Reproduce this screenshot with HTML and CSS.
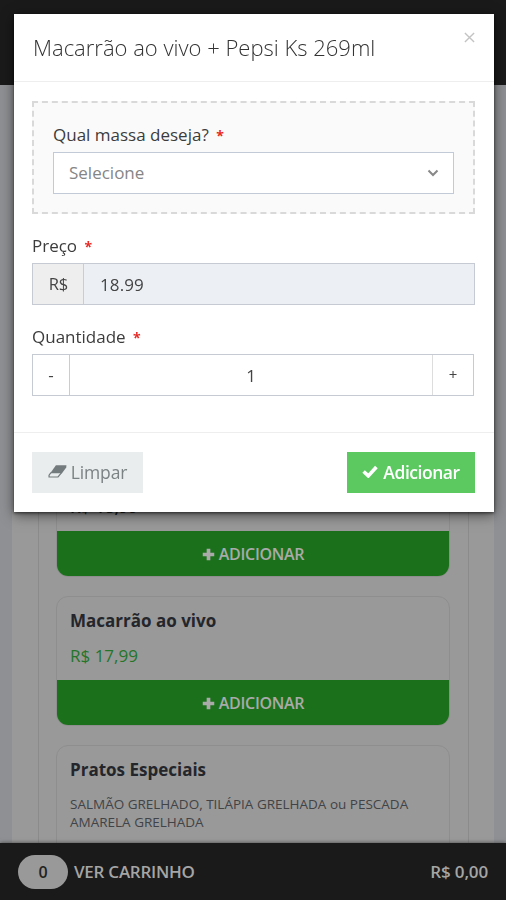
FILE: index.html
```html
<!DOCTYPE html>
<html lang="pt-BR">
<head>
<meta charset="utf-8">
<title>Macarrão ao vivo + Pepsi Ks 269ml</title>
<link rel="stylesheet" href="styles.css">
</head>
<body>
<div class="page">
  <header class="topbar"></header>
  <main class="content">
    <div class="panel">
      <section class="list">
        <article class="card">
          <div class="card-body card-body-low"><p class="price price-dark">R$ 18,99</p></div>
          <button class="card-add"><svg class="plus" viewBox="0 0 12 12"><path d="M4.300.7h3.400v3.600h3.600v3.400H7.700v3.600H4.300V7.700H.7V4.300h3.600z"/></svg><span>ADICIONAR</span></button>
        </article>
        <article class="card">
          <div class="card-body"><h3>Macarrão ao vivo</h3><p class="price">R$ 17,99</p></div>
          <button class="card-add"><svg class="plus" viewBox="0 0 12 12"><path d="M4.300.7h3.400v3.600h3.600v3.400H7.700v3.600H4.300V7.700H.7V4.300h3.600z"/></svg><span>ADICIONAR</span></button>
        </article>
        <article class="card card-tall">
          <div class="card-body"><h3>Pratos Especiais</h3><p class="desc">SALMÃO GRELHADO, TILÁPIA GRELHADA ou PESCADA<br>AMARELA GRELHADA</p></div>
        </article>
      </section>
    </div>
  </main>
  <footer class="cart"><span class="count">0</span><span class="cart-label">VER CARRINHO</span><span class="total">R$ 0,00</span></footer>
</div>
<div class="modal">
  <div class="modal-head">
    <h2>Macarrão ao vivo + Pepsi Ks 269ml</h2>
    <svg class="close" viewBox="0 0 12 12"><path d="M1 1l10 10M11 1L1 11"/></svg>
  </div>
  <div class="modal-body">
    <div class="option">
      <label>Qual massa deseja? <b>*</b></label>
      <div class="select"><span>Selecione</span><svg viewBox="0 0 12 8"><path d="M1.500 1.500L6 6l4.500-4.500"/></svg></div>
    </div>
    <label>Preço <b>*</b></label>
    <div class="group price-group"><span class="addon">R$</span><span class="value">18.99</span></div>
    <label>Quantidade <b>*</b></label>
    <div class="group qty-group"><span class="minus">-</span><span class="qty">1</span><span class="more">+</span></div>
  </div>
  <div class="modal-foot">
    <button class="btn clear"><svg class="eraser" viewBox="0 0 20 14"><path class="solid" d="M8.300.4h11.300l-.2 2.200-4.600 6.200H2.200z"/><path class="line" d="M3 8.200L.9 11v1.900h9.700l4-4.900"/></svg><span>Limpar</span></button>
    <button class="btn add"><svg class="check" viewBox="0 0 16 13"><path d="M1.600 6.500l4.700 4.400L14.400 2"/></svg><span>Adicionar</span></button>
  </div>
</div>
</body>
</html>
```
FILE: styles.css
```css
* { box-sizing: border-box; }
html, body { margin: 0; height: 100%; overflow: hidden; }
body { font-family: "Open Sans", sans-serif; background: #8e9093; }
h2, h3, p { margin: 0; }
button { border: 0; font-family: inherit; }
.page { height: 900px; display: flex; flex-direction: column; }
.topbar { height: 85px; flex: none; background: #1a1a1a; }
.content { flex: 1; min-height: 0; overflow: hidden; padding: 0 12px; }
.panel { height: 758px; background: #999; padding: 0 25px 0 26px; }
.list { height: 100%; border: 1px solid #8b8b8b; border-width: 0 1px; padding: 362px 18px 0; }
.card { height: 130px; margin: 0 0 19px -1px; border: 1px solid #8e8e8e; border-radius: 12px; overflow: hidden; display: flex; flex-direction: column; justify-content: space-between; }
.card-tall { height: 180px; }
.card-body { padding: 13px 12px 0 13px; }
.card-body-low { padding-top: 49px; }
.card h3 { font-size: 17px; line-height: 22px; font-weight: 700; color: #24262b; }
.price { margin-top: 14px; font-size: 17px; line-height: 20px; color: #257529; }
.price-dark { margin-top: 0; color: #222; font-weight: 600; }
.card-add { height: 46px; flex: none; margin: 0 -1px -1px; background: #1b711b; color: #aaa; display: flex; align-items: center; justify-content: center; gap: 4px; font-size: 16px; font-weight: 600; letter-spacing: -.3px; }
.plus { width: 13px; height: 13px; fill: #aaa; }
.desc { margin-top: 14px; font-size: 13.500px; line-height: 18px; color: #414346; white-space: nowrap; }
.cart { height: 57px; flex: none; background: #1a1a1a; box-shadow: 0 0 4px #444; color: #a5a5a5; display: flex; align-items: center; padding: 0 18px; font-size: 17px; font-weight: 600; position: relative; }
.count { width: 50px; height: 34px; border-radius: 17px; background: #999; color: #222; font-size: 16px; display: flex; align-items: center; justify-content: center; }
.cart-label { margin-left: 6px; letter-spacing: -.25px; }
.total { margin-left: auto; letter-spacing: -.15px; }
.modal { position: fixed; left: 14px; top: 14px; width: 480px; height: 498px; background: #fff; box-shadow: 0 1px 3px rgba(0,0,0,.6), 0 3px 12px rgba(0,0,0,.55); display: flex; flex-direction: column; }
.modal-head { height: 68px; flex: none; border-bottom: 1px solid #eee; padding: 0 19px; display: flex; align-items: center; justify-content: space-between; }
.modal-head h2 { font-size: 22px; line-height: 30px; margin-top: -2px; font-weight: 300; color: #333; white-space: nowrap; }
.close { width: 11px; height: 11px; align-self: flex-start; margin-top: 18px; fill: none; stroke: #c3c3c3; stroke-width: 1.500; }
.modal-body { flex: 1; padding: 19px 19px 0 18px; color: #444; font-size: 17px; }
label { display: block; height: 31px; line-height: 28px; font-size: 17px; color: #3c3c3c; }
label b { color: #e72b26; font-size: 14px; margin-left: 3px; }
.option { height: 113px; border: 2px dashed #d9d9d9; background: #fafafa; padding: 18px 19px 0; margin-bottom: 18px; }
.select { height: 42px; border: 1px solid #c2cad8; background: #fff; padding: 0 14px 2px 15px; display: flex; align-items: center; justify-content: space-between; color: #858585; }
.select svg { width: 12px; height: 8px; margin-top: 2px; fill: none; stroke: #888; stroke-width: 2; }
.group { height: 42px; display: flex; border: 1px solid #c5cad3; }
.price-group { margin-bottom: 18px; }
.group span { display: flex; align-items: center; }
.group .addon { width: 51px; justify-content: center; background: #eee; border-right: 1px solid #c8cdd4; font-size: 16.500px; padding: 0 0 2px 1px; }
.value { flex: 1; background: #ecf0f4; padding-left: 16px; letter-spacing: .1px; }
.qty-group { margin-right: 1px; }
.group .minus { width: 37px; justify-content: center; border-right: 1px solid #c8ccd3; padding-bottom: 2px; }
.qty { flex: 1; justify-content: center; }
.group .more { width: 41px; justify-content: center; border-left: 1px solid #ddd; font-size: 15px; padding-bottom: 3px; }
.modal-foot { height: 80px; flex: none; border-top: 1px solid #eee; padding: 0 19px 0 18px; display: flex; justify-content: space-between; align-items: center; }
.btn { height: 41px; display: flex; align-items: center; justify-content: center; font-size: 17.500px; padding-bottom: 3px; }
.clear { width: 111px; background: #e9eded; color: #7b8284; gap: 4px; letter-spacing: -.1px; }
.eraser { width: 19px; height: 13px; }
.solid { fill: #747b7d; }
.line { fill: none; stroke: #747b7d; stroke-width: 1.300; }
.add { width: 128px; background: #5bc960; color: #fff; gap: 5px; font-weight: 600; letter-spacing: -.45px; }
.check { width: 16px; height: 13px; fill: none; stroke: #fff; stroke-width: 3.600; }
```
